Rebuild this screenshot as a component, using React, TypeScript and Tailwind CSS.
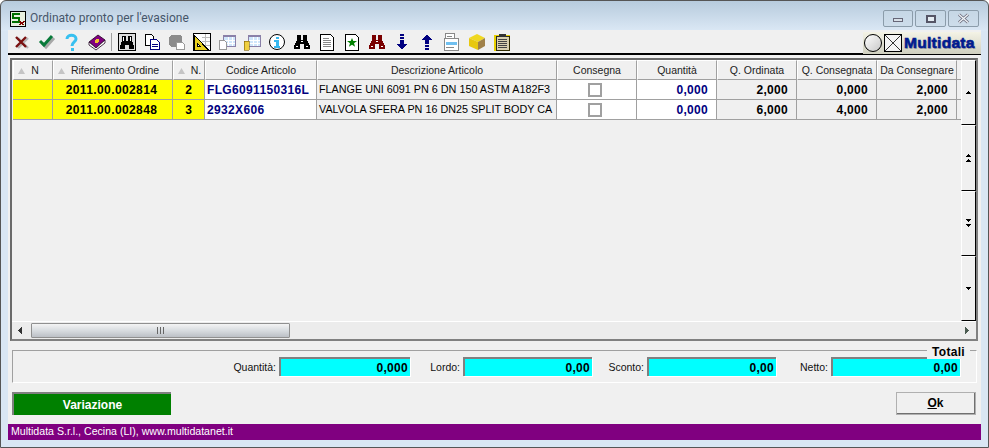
import type { ReactNode } from "react";

// small toolbar glyphs, all on an 18x18 grid
const Svg = ({ children }: { children: ReactNode }) => (
  <svg width="18" height="18" viewBox="0 0 18 18" shapeRendering="crispEdges">
    {children}
  </svg>
);

const Binoculars = ({ color }: { color: string }) => (
  <Svg>
    <path fill={color} d="M4 2h4v5h2V2h4v5l3 6v3h-6v-5H7v5H1v-3l3-6z" />
    <path fill="#fff" d="M3 13h2v1H3zM13 13h2v1h-2zM8 8h2v1H8z" />
  </Svg>
);

const TableDoc = ({ cup }: { cup?: boolean }) => (
  <Svg>
    <rect x="5.5" y="2.5" width="12" height="11" fill="#cfe6fb" stroke="#8a80a8" />
    <path fill="#8a80a8" d="M6 2h11v2H6z" />
    <path stroke="#fff" d="M6 7.5h11M6 10.5h11M10.5 4v9M14.5 4v9" />
    {cup ? (
      <path fill="#f0d040" stroke="#806000" strokeWidth=".6" d="M1 8h5v9H1z" />
    ) : (
      <path fill="#fff" stroke="#999" d="M1.5 7.5h5l2 2v7h-7z" />
    )}
  </Svg>
);

const icons: ReactNode[] = [
  <Svg key="x">
    <path stroke="#b8b8b8" strokeWidth="2.4" fill="none" shapeRendering="auto" d="M5 5l10 10M15 5L5 15" />
    <path stroke="#7a1010" strokeWidth="2.4" fill="none" shapeRendering="auto" d="M3 4l10 10M13 4L3 14" />
  </Svg>,
  <Svg key="ok">
    <path stroke="#a8a8a8" strokeWidth="3" fill="none" shapeRendering="auto" d="M4 10l4 4 8-9" />
    <path stroke="#087a3a" strokeWidth="3" fill="none" shapeRendering="auto" d="M2 8l4 4 8-9" />
  </Svg>,
  <Svg key="help">
    <path stroke="#38c0f0" strokeWidth="3" fill="none" shapeRendering="auto" d="M4 6c0-5 9-5 9 0 0 3-4 3-4 7" />
    <rect x="7.5" y="14.5" width="3" height="3" fill="#38c0f0" />
  </Svg>,
  <Svg key="book">
    <path fill="#800080" stroke="#200020" strokeWidth=".8" shapeRendering="auto" d="M1 9l9-7 7 5-9 8z" />
    <path fill="#fff" stroke="#200020" strokeWidth=".8" shapeRendering="auto" d="M1 9l7 6 9-8v3l-9 7-7-5z" />
    <circle cx="9" cy="8" r="2" fill="#f0c030" />
  </Svg>,
  null,
  <Svg key="find">
    <rect x=".5" y=".5" width="17" height="17" fill="#ddd" stroke="#000" />
    <path fill="#000" d="M4 3h4v5h2V3h4v5l2 5v3h-5v-4H7v4H2v-3l2-5z" />
    <path fill="#fff" d="M5 4h1v4H5zM12 4h1v4h-1z" />
  </Svg>,
  <Svg key="copy">
    <path fill="#fff" stroke="#000" d="M2.5 1.5h6l2 2v9h-8z" />
    <path fill="#fff" stroke="#000080" d="M7.5 6.5h6l3 3v7h-9z" />
    <path stroke="#000080" d="M9 11.5h6M9 13.5h6" />
  </Svg>,
  <Svg key="paste">
    <path fill="#8c8c8c" d="M1 4l2-2h9l2 2v10H3l-2-2z" />
    <path fill="#fff" stroke="#9a9a9a" d="M8.5 9.5h6l2 2v5h-8z" />
  </Svg>,
  <Svg key="square">
    <rect x=".5" y=".5" width="17" height="17" fill="#fff" stroke="#000" />
    <path stroke="#bbb" d="M9 4.5h8M9 8.5h8M9 12.5h8M12.5 1v16" />
    <path fill="#e8d020" stroke="#000" d="M1.5 2.5l14 14.5h-14z" />
    <path fill="#fff" stroke="#000" d="M4.5 10.5l3 3h-3z" />
  </Svg>,
  <TableDoc key="t1" />,
  <TableDoc key="t2" cup />,
  <Svg key="info">
    <circle cx="9" cy="9" r="7.5" fill="#fff" stroke="#000" shapeRendering="auto" />
    <rect x="7.5" y="3.5" width="3" height="2.5" fill="#38b8f0" />
    <path fill="#38b8f0" d="M6 7h4.500v6H12v2H6v-2h1.500V9H6z" />
  </Svg>,
  <Binoculars key="b1" color="#000" />,
  <Svg key="doc">
    <path fill="#fff" stroke="#000" d="M2.500 1.500h10l3 3v13h-13z" />
    <path stroke="#888" d="M5 5.500h6M5 7.500h8M5 9.500h8M5 11.500h8M5 13.500h8" />
  </Svg>,
  <Svg key="star">
    <path fill="#fff" stroke="#000" d="M2.500 1.500h10l3 3v13h-13z" />
    <path fill="#008000" shapeRendering="auto" d="M9 5l1.300 3H14l-3 2.200 1.100 3.500L9 11.800l-3.100 1.900L7 10.200 4 8h3.700z" />
  </Svg>,
  <Binoculars key="b2" color="#7a0000" />,
  <Svg key="down">
    <path fill="#000080" d="M7 1h4v2H7zM7 4h4v2H7zM7 7h4v4h3l-5 6-5-6h3z" />
  </Svg>,
  <Svg key="up">
    <path fill="#000080" d="M9 1l5 6h-3v4H7V7H4zM7 12h4v2H7zM7 15h4v2H7z" />
  </Svg>,
  <Svg key="form">
    <rect x="2.500" y=".5" width="9" height="5" fill="#fff" stroke="#888" />
    <rect x="1.500" y="5.500" width="14" height="12" fill="#fff" stroke="#888" />
    <rect x="3" y="9" width="11" height="3" fill="#70c0f0" />
    <path stroke="#888" d="M4 3.500h5M3 14.500h8" />
  </Svg>,
  <Svg key="box">
    <path fill="#f0d820" shapeRendering="auto" d="M1 5l8-4 8 4-7 4z" />
    <path fill="#e8c810" shapeRendering="auto" d="M1 5l9 4v8l-9-4z" />
    <path fill="#a08048" shapeRendering="auto" d="M17 5l-7 4v8l7-4z" />
  </Svg>,
  <Svg key="clip">
    <rect x="1" y="2" width="16" height="16" fill="#e8d000" />
    <rect x="3" y="3" width="13" height="14" fill="#d8d0b0" stroke="#000" strokeWidth=".8" />
    <rect x="6" y="1" width="7" height="3" fill="#333" />
    <path stroke="#444" d="M5 6.500h9M5 8.500h9M5 10.500h9M5 12.500h9M5 14.500h9" />
  </Svg>,
];

const cols = [
  { w: "w-[40px]", label: "N", sort: "ml-[4px]" },
  { w: "w-[120px]", label: "Riferimento Ordine", sort: "ml-[4px]" },
  { w: "w-[32px]", label: "N.", sort: "ml-[14px]" },
  { w: "w-[112px]", label: "Codice Articolo" },
  { w: "w-[240px]", label: "Descrizione Articolo" },
  { w: "w-[80px]", label: "Consegna" },
  { w: "w-[80px]", label: "Quantità" },
  { w: "w-[80px]", label: "Q. Ordinata" },
  { w: "w-[80px]", label: "Q. Consegnata" },
  { w: "w-[80px]", label: "Da Consegnare" },
];

const rows = [
  { rif: "2011.00.002814", n: "2", cod: "FLG6091150316L", desc: "FLANGE UNI 6091 PN 6 DN 150 ASTM A182F3", ord: "2,000", cons: "0,000", da: "2,000" },
  { rif: "2011.00.002848", n: "3", cod: "2932X606", desc: "VALVOLA SFERA PN 16 DN25 SPLIT BODY CA", ord: "6,000", cons: "4,000", da: "2,000" },
];

const cell = "h-[20px] shrink-0 flex items-center border-r border-b border-[#a0a0a0] overflow-hidden whitespace-nowrap";

const Total = ({ label, value, w, lw }: { label: string; value: string; w: string; lw: string }) => (
  <div className="flex items-center">
    <span className={`${lw} text-right pr-[3px] pt-[2px] text-[#111] whitespace-nowrap`}>{label}</span>
    <div className={`${w} h-[19px] bg-[#00ffff] border-t-2 border-l-2 border-[#808080] flex items-center justify-end pr-[2px] font-bold text-[12px] tracking-[0.3px] shadow-[1px_1px_0_#fff]`}>
      {value}
    </div>
  </div>
);

// the scroll buttons stack one or two small triangles
const ScrollBtn = ({ up, count }: { up?: boolean; count: number }) => (
  <div className="flex-1 flex flex-col gap-[2px] items-center justify-center bg-[#f0f0f0] border border-t-white border-l-white border-b-black border-r-black">
    {Array.from({ length: count }).map((_, i) => (
      <svg key={i} width="5" height="3" viewBox="0 0 5 3" shapeRendering="crispEdges">
        <path fill="#000" d={up ? "M2 0h1v1h1v1h1v1H0V2h1V1h1z" : "M0 0h5v1H4v1H3v1H2V2H1V1H0z"} />
      </svg>
    ))}
  </div>
);

export default function App() {
  return (
    <div className="w-[989px] h-[448px] overflow-hidden bg-white font-['Liberation_Sans',sans-serif] text-[10.5px] text-black">
      <div className="h-full flex flex-col rounded-t-[6px] border border-[#555] bg-[#d9e6f3] bg-gradient-to-b from-[#b7cbdd] to-[#dbe8f5] bg-[length:100%_30px] bg-no-repeat">
        {/* title bar */}
        <div className="h-[29px] pt-[6px] shrink-0 flex items-center pl-[9px] pr-[9px]">
          <svg width="16" height="16" viewBox="0 0 16 16" shapeRendering="crispEdges" className="mr-[4px]">
            <rect x=".5" y=".5" width="15" height="15" fill="#e8f0e0" stroke="#000" />
            <path fill="#007000" d="M2 2h8v2H4v2h6v6H2v-2h6V8H2z" />
            <path fill="#800000" d="M9 10h2l1 2 1-2h2l-2 2.500 1 1.500h-2l-1-1-1 1H9l1-1.500z" />
          </svg>
          <span className="text-[12px] text-[#46566a] font-['Roboto',sans-serif] mt-[-1px]">Ordinato pronto per l'evasione</span>
          <div className="ml-auto flex gap-[2px]">
            <div className="w-[30px] h-[17px] rounded-[2px] border border-[#8b9caa] bg-[#c8d8e6]/60 flex items-center justify-center">
              <div className="w-[10px] h-[4px] mt-[3px] border border-[#667] bg-[#d8e0e8]" />
            </div>
            <div className="w-[31px] h-[17px] rounded-[2px] border border-[#8b9caa] bg-[#c8d8e6]/60 flex items-center justify-center">
              <div className="w-[10px] h-[8px] border-2 border-[#556] bg-[#e4ecf2]" />
            </div>
            <div className="w-[31px] h-[17px] rounded-[2px] border border-[#8b9caa] bg-[#c8d8e6]/60 flex items-center justify-center">
              <svg width="13" height="11" viewBox="0 0 13 11">
                <path d="M2 1.500l9 8M11 1.500l-9 8" stroke="#667" strokeWidth="3" />
                <path d="M2 1.500l9 8M11 1.500l-9 8" stroke="#f0f4f8" strokeWidth="1.400" />
              </svg>
            </div>
          </div>
        </div>

        {/* client area */}
        <div className="flex-1 mx-[7px] mb-[7px] flex flex-col min-h-0 bg-[#f0f0f0]">
          {/* toolbar */}
          <div className="h-[24px] mt-[1px] shrink-0 flex items-center border-b-2 border-black pl-[1px] relative">
            {icons.map((ic, i) =>
              ic ? (
                <div key={i} className="w-[25px] flex justify-center shrink-0">
                  {ic}
                </div>
              ) : (
                <div key={i} className="w-[5px] h-[18px] shrink-0 flex justify-center">
                  <div className="w-[1px] bg-[#a0a0a0]" />
                </div>
              )
            )}
            <div className="absolute right-0 top-[1px] w-[118px] h-[22px] flex items-center gap-[2px] pl-[1px] bg-gradient-to-b from-[#f4f3e6] to-[#d0d0c0]">
              <div className="w-[18px] h-[18px] rounded-full border border-black bg-gradient-to-br from-white to-[#c8c8c8] shrink-0" />
              <svg width="18" height="18" viewBox="0 0 18 18" className="shrink-0">
                <rect x=".5" y=".5" width="17" height="17" fill="#f4f4f4" stroke="#000" />
                <path d="M1 1l16 16M17 1L1 17" stroke="#000" strokeWidth=".8" />
              </svg>
              <span className="text-[15.5px] leading-[18px] font-bold text-[#001a90] tracking-[0.3px] [text-shadow:1px_1px_0_#a8a8a0] [-webkit-text-stroke:0.6px_#001a90]">Multidata</span>
            </div>
          </div>

          {/* grid */}
          <div className="h-[283px] mt-[3px] ml-[2px] mr-[3px] shrink-0 flex flex-col border-2 border-[#6a6a6a] border-r-[#808080] border-b-[#808080] bg-[#f0f0f0]">
            <div className="flex-1 flex min-h-0">
              <div className="flex-1 min-w-0 pl-[1px]">
                <div className="flex">
                  {cols.map((c) => (
                    <div key={c.label} className={`${c.w} relative h-[20px] pt-[1px] shrink-0 flex items-center justify-center border-t border-l border-t-white border-l-white border-r border-b border-r-[#a0a0a0] border-b-[#a0a0a0] text-[#222] whitespace-nowrap`}>
                      {c.sort && (
                        <svg width="7" height="6" viewBox="0 0 7 6" className="absolute left-[4px] top-[7px]">
                          <path d="M3.500 0l3.500 6H0z" fill="#c4c4c4" />
                        </svg>
                      )}
                      <span className={c.sort ?? ""}>{c.label}</span>
                    </div>
                  ))}
                  <div className="flex-1 h-[20px] border-b border-[#a0a0a0]" />
                </div>
                {rows.map((r) => (
                  <div key={r.rif} className="flex">
                    <div className={`${cell} w-[40px] bg-[#ffff00]`} />
                    <div className={`${cell} w-[120px] bg-[#ffff00] justify-center font-bold text-[12px] tracking-[0.4px] pr-[2px]`}>{r.rif}</div>
                    <div className={`${cell} w-[32px] bg-[#ffff00] justify-center font-bold text-[12px]`}>{r.n}</div>
                    <div className={`${cell} w-[112px] bg-white pl-[2px] font-bold text-[12px] text-[#000080] tracking-[0.35px]`}>{r.cod}</div>
                    <div className={`${cell} w-[240px] bg-[#f0f0f0] pl-[2px] pr-[3px] text-[10.8px]`}>{r.desc}</div>
                    <div className={`${cell} w-[80px] bg-white justify-center`}>
                      <div className="w-[14px] h-[14px] mr-[3px] bg-white border-2 border-[#a0a0a0]" />
                    </div>
                    <div className={`${cell} w-[80px] bg-white justify-end pr-[8px] font-bold text-[12px] tracking-[0.3px] text-[#000080]`}>0,000</div>
                    <div className={`${cell} w-[80px] bg-[#f0f0f0] justify-end pr-[8px] font-bold text-[12px] tracking-[0.3px]`}>{r.ord}</div>
                    <div className={`${cell} w-[80px] bg-[#f0f0f0] justify-end pr-[8px] font-bold text-[12px] tracking-[0.3px]`}>{r.cons}</div>
                    <div className={`${cell} w-[80px] bg-[#f0f0f0] justify-end pr-[8px] font-bold text-[12px] tracking-[0.3px]`}>{r.da}</div>
                    <div className="flex-1 h-[20px] border-b border-[#a0a0a0]" />
                  </div>
                ))}
              </div>
              <div className="w-[15px] shrink-0 flex flex-col">
                <ScrollBtn up count={1} />
                <ScrollBtn up count={2} />
                <ScrollBtn count={2} />
                <ScrollBtn count={1} />
              </div>
            </div>
            {/* horizontal scrollbar */}
            <div className="h-[18px] pb-[1px] shrink-0 flex items-center bg-[#ececec] border-t border-white">
              <div className="w-[19px] pl-[6px]">
                <svg width="4" height="7" viewBox="0 0 4 7" shapeRendering="crispEdges">
                  <path fill="#333" d="M3 0h1v7H3V6H2V5H1V4H0V3h1V2h1V1h1z" />
                </svg>
              </div>
              <div className="w-[259px] h-[15px] rounded-[1px] border border-[#909090] bg-gradient-to-b from-[#f4f4f4] via-[#d8dce0] to-[#bcc0c6] flex items-center justify-center">
                <div className="w-[7px] h-[7px] border-x border-[#666] flex justify-center">
                  <div className="w-[1px] h-full bg-[#666]" />
                </div>
              </div>
              <div className="ml-auto pr-[7px]">
                <svg width="4" height="7" viewBox="0 0 4 7" shapeRendering="crispEdges">
                  <path fill="#4a5a50" d="M0 0h1v1h1v1h1v1h1v1H3v1H2v1H1v1H0z" />
                </svg>
              </div>
            </div>
          </div>

          {/* totals */}
          <div className="relative h-[33px] mt-[9px] ml-[4px] mr-[4px] shrink-0 border border-t-[#a0a0a0] border-l-[#a0a0a0] border-r-white border-b-white flex items-center justify-end pr-[16px]">
            <span className="absolute right-[6px] top-[-6px] bg-[#f0f0f0] px-[5px] font-bold text-[12px] leading-[14px] tracking-[0.3px]">Totali</span>
            <div className="flex items-center">
              <Total label="Quantità:" value="0,000" w="w-[131px]" lw="w-[60px]" />
              <Total label="Lordo:" value="0,00" w="w-[129px]" lw="w-[53px]" />
              <Total label="Sconto:" value="0,00" w="w-[129px]" lw="w-[55px]" />
              <Total label="Netto:" value="0,00" w="w-[129px]" lw="w-[55px]" />
            </div>
          </div>

          {/* buttons */}
          <div className="flex justify-between items-center mt-[9px] mx-[4px] shrink-0">
            <div className="w-[159px] h-[23px] bg-[#008000] border-t-2 border-l-2 border-t-[#808080] border-l-[#808080] flex items-center justify-center text-white font-bold text-[12px]">
              Variazione
            </div>
            <div className="w-[80px] h-[23px] mr-[1px] bg-[#f0f0f0] border border-t-white border-l-white border-r-2 border-b-2 border-r-[#707070] border-b-[#707070] outline outline-1 outline-[#b0b0b0] outline-offset-[-1px] flex items-center justify-center font-bold text-[12px]">
              <span className="underline">O</span>k
            </div>
          </div>

          {/* status */}
          <div className="mt-auto h-[16px] shrink-0 bg-[#800080] text-white flex items-center pl-[3px] text-[10.6px]">
            Multidata S.r.l., Cecina (LI), www.multidatanet.it
          </div>
        </div>
      </div>
    </div>
  );
}
